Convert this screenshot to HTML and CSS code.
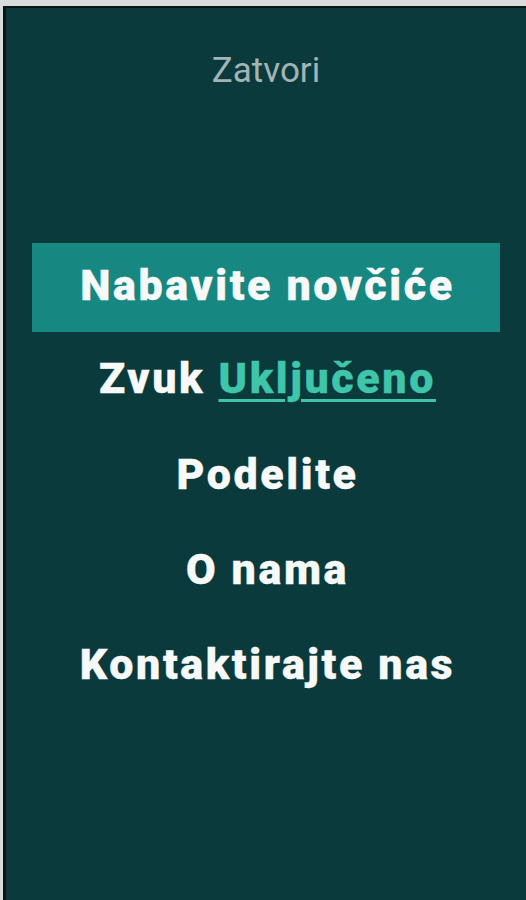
FILE: index.html
```html
<!DOCTYPE html>
<html lang="sr">
<head>
<meta charset="utf-8">
<title>Meni</title>
<link rel="stylesheet" href="styles.css">
</head>
<body>
<div class="frame">
  <div class="close">Zatvori</div>
  <nav class="menu">
    <div class="item item-active">Nabavite novčiće</div>
    <div class="item item-sound">Zvuk <span class="toggle">Uključeno</span></div>
    <div class="item">Podelite</div>
    <div class="item">O nama</div>
    <div class="item">Kontaktirajte nas</div>
  </nav>
</div>
</body>
</html>
```

FILE: styles.css
```css
html, body {
  margin: 0;
  padding: 0;
  height: 100%;
}
body {
  background: #d9dcdc;
  padding: 6px 0 0 3px;
  box-sizing: border-box;
  font-family: Roboto, "Liberation Sans", sans-serif;
}
.frame {
  height: 100%;
  background: #0b3a3c;
  border-top: 2px solid #0c1414;
  border-left: 3px solid #0c1414;
  box-sizing: border-box;
  display: flex;
  flex-direction: column;
  align-items: stretch;
}
.close {
  padding-top: 42px;
  font-size: 35px;
  line-height: 41px;
  color: #a2b4b3;
  text-align: center;
}
.menu {
  margin-top: 152px;
  display: flex;
  flex-direction: column;
}
.item {
  font-size: 43px;
  font-weight: 900;
  letter-spacing: 2.6px;
  text-indent: 3px;
  color: #f7f9f9;
  text-align: center;
  line-height: 95px;
  -webkit-text-stroke: 0.3px #f7f9f9;
}
.item-active {
  margin: 0 26px;
  background: #178782;
  line-height: 85px;
  padding-bottom: 4px;
}
.item-sound {
  line-height: 92px;
  padding-bottom: 3px;
}
.toggle {
  color: #3fc6aa;
  -webkit-text-stroke: 0.3px #3fc6aa;
  text-decoration: underline;
  text-decoration-thickness: 3px;
  text-underline-offset: 6px;
}
```
